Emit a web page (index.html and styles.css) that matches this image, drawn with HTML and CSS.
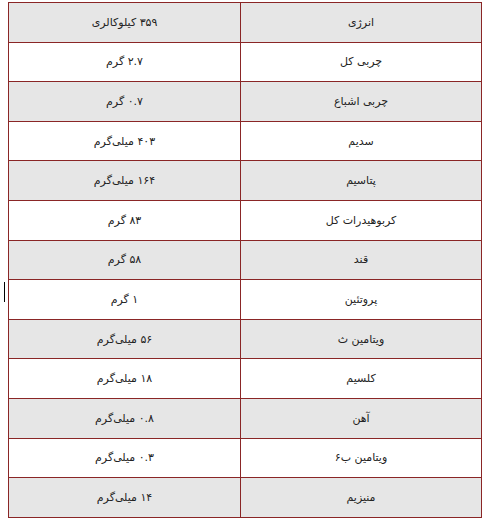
FILE: index.html
```html
<!DOCTYPE html>
<html lang="fa">
<head>
<meta charset="utf-8">
<link rel="stylesheet" href="styles.css">
</head>
<body>
<div class="wrap">
<table class="facts" dir="rtl">
<colgroup><col class="c-label"><col class="c-value"></colgroup>
<tr class="alt"><td>انرژی</td><td>۳۵۹ کیلوکالری</td></tr>
<tr><td>چربی کل</td><td>۲.۷ گرم</td></tr>
<tr class="alt"><td>چربی اشباع</td><td>۰.۷ گرم</td></tr>
<tr><td>سدیم</td><td>۴۰۳ میلی‌گرم</td></tr>
<tr class="alt"><td>پتاسیم</td><td>۱۶۴ میلی‌گرم</td></tr>
<tr><td>کربوهیدرات کل</td><td>۸۳ گرم</td></tr>
<tr class="alt"><td>قند</td><td>۵۸ گرم</td></tr>
<tr><td>پروتئین</td><td>۱ گرم</td></tr>
<tr class="alt"><td>ویتامین ث</td><td>۵۶ میلی‌گرم</td></tr>
<tr><td>کلسیم</td><td>۱۸ میلی‌گرم</td></tr>
<tr class="alt"><td>آهن</td><td>۰.۸ میلی‌گرم</td></tr>
<tr><td>ویتامین ب۶</td><td>۰.۳ میلی‌گرم</td></tr>
<tr class="alt"><td>منیزیم</td><td>۱۴ میلی‌گرم</td></tr>
</table>
<span class="caret"></span>
</div>
</body>
</html>
```
FILE: styles.css
```css
html, body {
  margin: 0;
  padding: 0;
  background: #ffffff;
}
.wrap {
  position: relative;
  padding: 2px 0 0 8px;
}
.facts {
  border-collapse: collapse;
  width: 473px;
  table-layout: fixed;
  font-family: "DejaVu Sans", sans-serif;
  font-size: 11px;
  color: #222222;
}
.c-label {
  width: 241px;
}
.c-value {
  width: 232px;
}
.facts td {
  border: 1px solid #8a2626;
  height: 38.6px;
  padding: 0;
  text-align: center;
  vertical-align: middle;
}
.facts tr.alt td {
  background: #e6e6e6;
}
.caret {
  position: absolute;
  left: 4px;
  top: 282px;
  width: 1px;
  height: 20px;
  background: #000000;
}
```
